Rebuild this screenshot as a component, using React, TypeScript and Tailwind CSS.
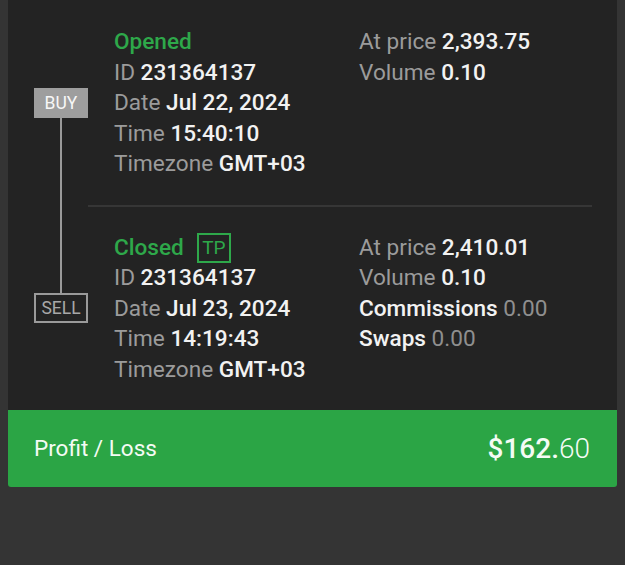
import React from "react";

const Row = ({ label, value, invert }: { label: string; value: string; invert?: boolean }) => (
  <div className="whitespace-nowrap">
    <span className={invert ? "text-[#f2f2f2] font-medium" : "text-[#9b9b9b]"}>{label}</span>{" "}
    <span className={invert ? "text-[#8f8f8f]" : "text-[#f2f2f2] font-medium"}>{value}</span>
  </div>
);

const App = () => {
  const opened = [
    ["ID", "231364137"],
    ["Date", "Jul 22, 2024"],
    ["Time", "15:40:10"],
    ["Timezone", "GMT+03"],
  ];
  const closed = [
    ["ID", "231364137"],
    ["Date", "Jul 23, 2024"],
    ["Time", "14:19:43"],
    ["Timezone", "GMT+03"],
  ];

  return (
    <div
      className="min-h-[565px] bg-[#343434] px-[8px]"
      style={{ fontFamily: "Roboto, 'Noto Sans', sans-serif" }}
    >
      {/* Trade card */}
      <div className="bg-[#232323] flex text-[22.6px] leading-[30.5px]">
        {/* Timeline */}
        <div className="w-[80px] pl-[26px] flex flex-col items-center shrink-0">
          <div className="h-[88px]" />
          <div className="w-[54px] h-[30px] bg-[#9e9e9e] text-[#f7f7f7] text-[17.5px] leading-[30px] text-center">
            BUY
          </div>
          <div className="w-[2px] h-[175px] bg-[#9a9a9a]" />
          <div className="w-[54px] h-[30px] border-2 border-[#9a9a9a] text-[#a8a8a8] text-[17.5px] leading-[26px] text-center">
            SELL
          </div>
        </div>

        {/* Details */}
        <div className="flex-1 mr-[25px]">
          <div className="pl-[26px] pt-[27px] pb-[25px] grid grid-cols-[245px_1fr]">
            <div>
              <div className="text-[#2ea84a] font-medium">Opened</div>
              {opened.map(([l, v]) => (
                <Row key={l} label={l} value={v} />
              ))}
            </div>
            <div>
              <Row label="At price" value="2,393.75" />
              <Row label="Volume" value="0.10" />
            </div>
          </div>

          <div className="h-[2px] bg-[#363636]" />

          <div className="pl-[26px] pt-[26px] pb-[25px] grid grid-cols-[245px_1fr]">
            <div>
              <div className="flex items-center gap-[13px]">
                <span className="text-[#2ea84a] font-medium">Closed</span>
                <span className="w-[34px] h-[30px] border-2 border-[#2ea84a] text-[#2ea84a] text-[19px] leading-[26px] text-center">
                  TP
                </span>
              </div>
              {closed.map(([l, v]) => (
                <Row key={l} label={l} value={v} />
              ))}
            </div>
            <div>
              <Row label="At price" value="2,410.01" />
              <Row label="Volume" value="0.10" />
              <Row label="Commissions" value="0.00" invert />
              <Row label="Swaps" value="0.00" invert />
            </div>
          </div>
        </div>
      </div>

      {/* Profit / Loss bar */}
      <div className="h-[77px] bg-[#2ba545] rounded-b-[3px] flex items-center justify-between pl-[26px] pr-[27px] text-[#f4fbf4]">
        <span className="text-[22.5px]">Profit / Loss</span>
        <span className="text-[28px]">
          <span className="font-medium">$162.</span>
          <span className="font-light">60</span>
        </span>
      </div>
    </div>
  );
};

export default App;
